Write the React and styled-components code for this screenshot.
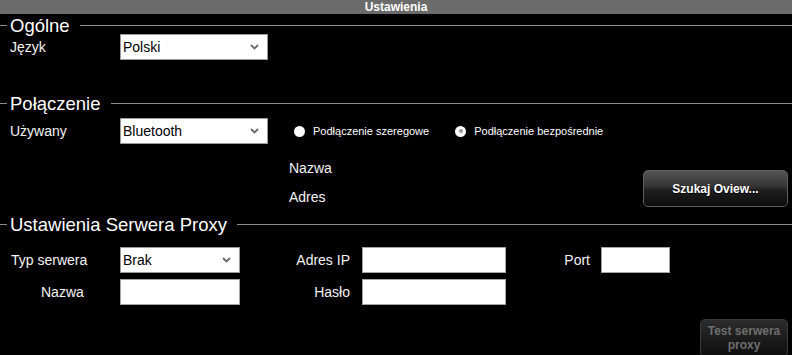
import React from 'react';
import styled, { createGlobalStyle } from 'styled-components';

const GlobalStyle = createGlobalStyle`
    html, body {
        margin: 0;
        padding: 0;
        background: #000;
    }
    body {
        font-family: 'Liberation Sans', Arial, sans-serif;
        color: #fff;
    }
`;

const Screen = styled.div`
    width: 792px;
    height: 355px;
    overflow: hidden;
    background: #000;
    display: flex;
    flex-direction: column;
`;

const TitleBar = styled.div`
    height: 16px;
    background: #6b6b6b;
    display: flex;
    align-items: center;
    justify-content: center;
    font-size: 12px;
    font-weight: bold;
    color: #fff;
`;

const Legend = styled.div`
    display: flex;
    align-items: center;
    height: 21px;
    margin-top: ${(p) => p.$top}px;

    &::before {
        content: '';
        width: 7px;
        height: 1px;
        background: #8c8c8c;
        margin-right: 3px;
    }
    &::after {
        content: '';
        flex: 1;
        height: 1px;
        background: #8c8c8c;
        margin-left: 10px;
    }
`;

const LegendText = styled.span`
    font-size: 18.5px;
    line-height: 21px;
    color: #fff;
`;

const Row = styled.div`
    display: flex;
    align-items: center;
    height: 26px;
    margin-top: ${(p) => p.$top}px;
`;

const Label = styled.div`
    box-sizing: border-box;
    width: ${(p) => p.$width || 120}px;
    padding-left: ${(p) => p.$indent || 10}px;
    padding-right: ${(p) => p.$padRight || 0}px;
    text-align: ${(p) => p.$align || 'left'};
    font-size: 14px;
    color: #f4f4f4;
    white-space: nowrap;
`;

const SelectBox = styled.div`
    box-sizing: border-box;
    width: ${(p) => p.$width}px;
    height: 26px;
    background: #fff;
    border: 1px solid #9a9a9a;
    display: flex;
    align-items: center;
    padding: 0 4px 0 2px;
    font-size: 14px;
    color: #000;
`;

const SelectValue = styled.span`
    flex: 1;
`;

const Chevron = styled.svg`
    width: 9px;
    height: 6px;
    margin-right: 4px;
`;

const Select = ({ width, value }) => (
    <SelectBox $width={width}>
        <SelectValue>{value}</SelectValue>
        <Chevron viewBox="0 0 9 6">
            <polyline points="1,1 4.5,4.5 8,1" fill="none" stroke="#6a6a6a" strokeWidth="1.8" />
        </Chevron>
    </SelectBox>
);

const RadioGroup = styled.div`
    display: flex;
    align-items: center;
    margin-left: 26px;
    gap: 26px;
`;

const RadioItem = styled.label`
    display: flex;
    align-items: center;
    gap: 8px;
    font-size: 11px;
    color: #fff;
`;

const RadioDot = styled.span`
    width: 11px;
    height: 11px;
    border-radius: 50%;
    background: radial-gradient(circle at 50% 45%, #fff 60%, #cfcfcf 100%);
    display: flex;
    align-items: center;
    justify-content: center;

    &::after {
        content: '';
        width: 4px;
        height: 4px;
        border-radius: 50%;
        background: ${(p) => (p.$checked ? '#9a9a9a' : 'transparent')};
    }
`;

const Radio = ({ checked, children }) => (
    <RadioItem>
        <RadioDot $checked={checked} />
        {children}
    </RadioItem>
);

const InfoRow = styled.div`
    display: flex;
    align-items: flex-end;
    margin-top: 14px;
`;

const InfoList = styled.div`
    display: flex;
    flex-direction: column;
    gap: 9px;
    padding-left: 289px;
    font-size: 14px;
    line-height: 20px;
    color: #f4f4f4;
`;

const DarkButton = styled.div`
    box-sizing: border-box;
    width: ${(p) => p.$width}px;
    height: ${(p) => p.$height}px;
    margin-left: auto;
    margin-right: 4px;
    margin-top: ${(p) => p.$top || 0}px;
    border-radius: 5px;
    border: 1px solid ${(p) => (p.$disabled ? '#3a3a3a' : '#5e5e5e')};
    background: ${(p) =>
        p.$disabled
            ? 'linear-gradient(#2c2c2c, #1c1c1c 50%, #0e0e0e)'
            : 'linear-gradient(#545454, #333 45%, #1e1e1e 55%, #0c0c0c)'};
    display: flex;
    align-items: center;
    justify-content: center;
    text-align: center;
    font-size: 12px;
    line-height: 14px;
    font-weight: bold;
    color: ${(p) => (p.$disabled ? '#6e6e6e' : '#fff')};
    text-shadow: ${(p) => (p.$disabled ? 'none' : '0 1px 1px #000')};
    flex-shrink: 0;
`;

const ProxyGrid = styled.div`
    display: grid;
    grid-template-columns: 120px 120px 122px 144px 95px 69px;
    grid-template-rows: 26px 26px;
    row-gap: 6px;
    align-items: center;
    margin-top: 12px;
`;

const TextInput = styled.div`
    box-sizing: border-box;
    height: 26px;
    background: #fff;
    border: 1px solid #a5a5a5;
`;

const Spacer = styled.div``;

export default function App() {
    return (
        <>
            <GlobalStyle />
            <Screen>
                <TitleBar>Ustawienia</TitleBar>

                <Legend $top={1}>
                    <LegendText>Ogólne</LegendText>
                </Legend>
                <Row $top={-2}>
                    <Label>Język</Label>
                    <Select width={148} value="Polski" />
                </Row>

                <Legend $top={33}>
                    <LegendText>Połączenie</LegendText>
                </Legend>
                <Row $top={4}>
                    <Label>Używany</Label>
                    <Select width={148} value="Bluetooth" />
                    <RadioGroup>
                        <Radio>Podłączenie szeregowe</Radio>
                        <Radio checked>Podłączenie bezpośrednie</Radio>
                    </RadioGroup>
                </Row>
                <InfoRow>
                    <InfoList>
                        <span>Nazwa</span>
                        <span>Adres</span>
                    </InfoList>
                    <DarkButton $width={145} $height={37}>Szukaj Oview...</DarkButton>
                </InfoRow>

                <Legend $top={7}>
                    <LegendText>Ustawienia Serwera Proxy</LegendText>
                </Legend>
                <ProxyGrid>
                    <Label $indent={11}>Typ serwera</Label>
                    <Select width={120} value="Brak" />
                    <Label $width={122} $indent={0} $padRight={12} $align="right">Adres IP</Label>
                    <TextInput />
                    <Label $width={95} $indent={0} $padRight={11} $align="right">Port</Label>
                    <TextInput />

                    <Label $indent={41}>Nazwa</Label>
                    <TextInput />
                    <Label $width={122} $indent={0} $padRight={12} $align="right">Hasło</Label>
                    <TextInput />
                    <Spacer />
                    <Spacer />
                </ProxyGrid>
                <DarkButton $width={88} $height={38} $top={14} $disabled>
                    Test serwera
                    <br />
                    proxy
                </DarkButton>
            </Screen>
        </>
    );
}
